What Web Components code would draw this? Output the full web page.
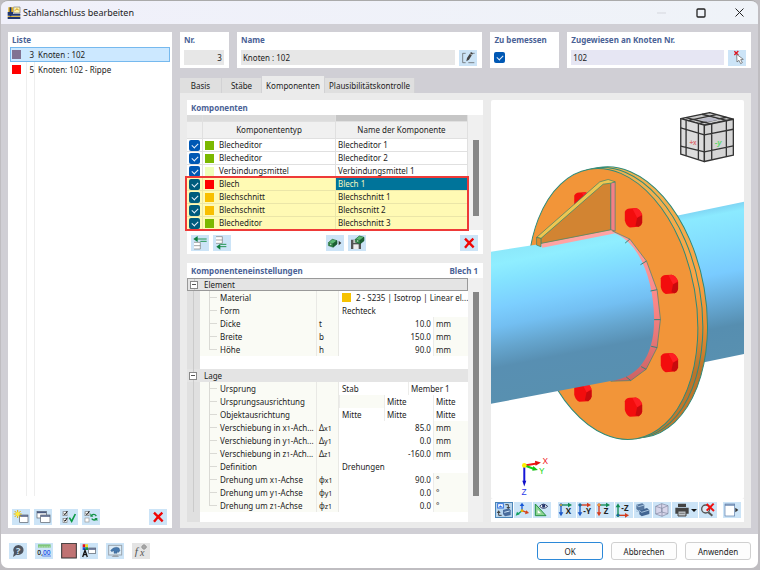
<!DOCTYPE html>
<html lang="de">
<head>
<meta charset="utf-8">
<title>Stahlanschluss bearbeiten</title>
<style>
  html { height: 100%; }
  body { margin: 0; min-height: 100%; display: flex; background: #bfbdc1; color: #1c1c1c;
    font: 8px/13px "Noto Sans", "Open Sans", sans-serif; }
</style>
</head>
<body>
<steel-dialog></steel-dialog>
<script>
const BASE = `*{box-sizing:border-box} button,input{font:inherit;color:inherit;margin:0} button{cursor:default}`;
function define(name, render) {
  customElements.define(name, class extends HTMLElement {
    connectedCallback() {
      if (this.shadowRoot) return;
      const t = document.createElement('template');
      t.innerHTML = render(this);
      this.attachShadow({ mode: 'open' }).append(t.content.cloneNode(true));
    }
  });
}

const axisIcon = (a, b, dot, label, up) => `
  <g stroke-width="4" fill="none"><path stroke="${a}" d="M8 ${up ? 40 : 9}H32"/><path stroke="${b}" d="M9 ${up ? '40V14' : '9V34'}"/></g>
  <path fill="${a}" d="M30 ${up ? 33 : 2}l12 7-12 7z"/>
  <path fill="${b}" d="${up ? 'M2 16L9 4l7 12z' : 'M2 31h14L9 43z'}"/>
  <circle cx="9" cy="${up ? 40 : 9}" r="4" fill="${dot}" stroke="${b}" stroke-width="2"/>
  <text x="${label.length > 1 ? 19 : 23}" y="${up ? 26 : 37}" font-size="24" font-weight="700" fill="#222">${label}</text>`;
const delX = '<path d="M15 11Q28 24 41 37M40 11Q26 24 15 38" stroke="#f00505" stroke-width="7" fill="none"/>';
const win = (x, y, w, h, f = '#fff') => `<rect x="${x}" y="${y}" width="${w}" height="${h}" fill="${f}" stroke="#555c66" stroke-width="2"/><path d="M${x} ${y + 3}h${w}" stroke="#4a5a80" stroke-width="5"/>`;
const tick = (x, y) => `<rect x="${x}" y="${y}" width="12" height="12" fill="#fff" stroke="#777" stroke-width="2"/><path d="M${x + 2} ${y + 5}l4 4 7-11" fill="none" stroke="#111" stroke-width="3"/>`;
const part = (x, y) => `<g transform="translate(${x} ${y})" stroke="#17502a" stroke-width="1"><path fill="#2d8745" d="M0 10L12 0 26 4V14L14 24 0 19z"/><path fill="#5cb874" d="M0 10L12 0 26 4 14 13z"/><path fill="#1b5f33" d="M14 13L26 4V14L14 24z"/><circle cx="7" cy="15" r="3" fill="#bfe7c7"/></g>`;
const ICONS = {
  edit: '<g fill="none" stroke="#555" stroke-width="2"><path d="M20 10H11V38H20M28 38H46M41 10h6"/></g><path d="M22 34l2-10L36 6l6 4L30 29z" fill="#444"/><path d="M33 11l6 4" stroke="#fff" stroke-width="2"/>',
  pick: '<path d="M19 4l12 11M31 3L19 15" stroke="#e01522" stroke-width="4"/><path d="M26 13l1 23 6-5 5 10 5-3-5-9 8-1z" fill="#fff" stroke="#555" stroke-width="2"/>',
  newItem: win(23, 18, 25, 22) + '<g stroke="#e3b600" stroke-width="3"><path d="M17 3v24M5 15h24M8 6l18 18M26 6L8 24"/></g><circle cx="17" cy="15" r="6" fill="#ffea3c"/>',
  copyItem: win(9, 7, 28, 20) + win(20, 18, 28, 22),
  checkAll: tick(9, 8) + tick(9, 28) + '<path d="M28 26l7 11L46 15" fill="none" stroke="#0c9b45" stroke-width="5"/>',
  checkToggle: tick(9, 8) + '<rect x="9" y="27" width="12" height="12" fill="#fff" stroke="#999" stroke-width="2"/><path d="M28 20q8-8 15 1M44 29q-8 8-15 0" fill="none" stroke="#159447" stroke-width="4"/><path d="M25 13v10h9zM46 37V27H37z" fill="#159447"/>',
  remove: delX,
  rowAbove: '<path d="M9 22H28V42H9M9 32H28" fill="#fff" stroke="#777" stroke-width="2"/><path d="M16 12H47M28 19H47" stroke="#239652" stroke-width="3"/><path d="M7 12L20 3v18z" fill="#108040"/>',
  rowBelow: '<path d="M9 5H28V25H9M9 15H28" fill="#fff" stroke="#777" stroke-width="2"/><path d="M20 35H40M22 28H40" stroke="#239652" stroke-width="3"/><path d="M10 35L22 26v18z" fill="#108040"/>',
  partNext: part(7, 13) + '<path d="M38 17l8 7-8 7z" fill="#333"/>',
  partSave: '<path d="M9 14H35L39 18V42H9z" fill="#555"/><rect x="16" y="28" width="16" height="14" fill="#eee"/><rect x="16" y="15" width="14" height="9" fill="#ccc"/>' + part(22, 3),
  help: '<path d="M28 6a16 15 0 1 1-6 29L12 42l3-13A16 15 0 0 1 28 6z" fill="#4e5560"/><text x="21" y="32" font-size="28" font-weight="700" fill="#cce4f7">?</text>',
  units: '<rect x="9" y="4" width="38" height="10" fill="#7ec67b"/><path d="M13 9v5m5-5v5m5-5v5m5-5v5m5-5v5m5-5v5m5-5v5" stroke="#fff" stroke-width="1"/><text x="7" y="35" font-size="20" font-weight="600" fill="#222">0,<tspan fill="#2455e8">00</tspan></text><path d="M22 39H48" stroke="#2455e8" stroke-width="2"/>',
  colour: '<rect x="2" y="1" width="44" height="44" fill="#c07373" stroke="#333" stroke-width="3"/>',
  display: '<path fill="#e6101a" d="M8 4h8v9H8z"/><path fill="#ead822" d="M16 4h8v9h-8z"/><path fill="#1b4fd8" d="M8 13h8v8H8z"/><path fill="#13973e" d="M16 13h8v8h-8z"/><path d="M8 42l7-20 7 20M11 35h9" stroke="#111" stroke-width="4" fill="none"/>' + win(26, 15, 21, 16),
  monitor: '<rect x="8" y="7" width="39" height="29" fill="#dcecf8" stroke="#9ba4ad" stroke-width="3"/><path d="M17 42h22l-4-5H22z" fill="#9ba4ad"/><path d="M14 22q12-14 25-7l3 8-6 6-3-5v7h-9v-8l-7 3z" fill="#4779ad" stroke="#2b4f79" stroke-width="1"/>',
  formula: '<text x="8" y="36" font-size="34" font-style="italic" font-family="Liberation Serif,serif" fill="#555">f</text><text x="24" y="40" font-size="30" font-style="italic" font-family="Liberation Serif,serif" fill="#555">x</text><circle cx="36" cy="12" r="6" fill="none" stroke="#777" stroke-width="2"/><path d="M28 12h17M36 4v16" stroke="#777" stroke-width="2"/>',
  cycle: '<rect x="8" y="5" width="17" height="13" fill="#fff" stroke="#2f6fe0" stroke-width="3"/><path d="M11 16l5-6 7 6z" fill="#2f6fe0"/><path d="M31 8h9v9M20 40h-9v-9" fill="none" stroke="#444" stroke-width="3"/><path d="M34 15h12l-6 7zM5 33h12l-6-8z" fill="#444"/><path d="M24 24l18-5 5 6v14l-17 4-6-7z" fill="#4a6c9c"/><path d="M28 31l16-4" stroke="#cce4f7" stroke-width="3"/>',
  axes: '<path d="M24 24V9" stroke="#1757d6" stroke-width="4"/><path d="M17 12L24 2l7 10z" fill="#1757d6"/><path d="M24 26L12 36" stroke="#10a060" stroke-width="4"/><path d="M5 41l4-12 8 8z" fill="#10a060"/><path d="M24 26l14 5" stroke="#d4431d" stroke-width="4"/><path d="M45 33l-12 4 4-12z" fill="#d4431d"/><circle cx="24" cy="26" r="4" fill="#e7b800"/>',
  measure: '<path d="M7 6L39 41H7z" fill="#8ed493" stroke="#249145" stroke-width="3"/><path d="M14 23l10 11H14z" fill="#fff"/><path d="M20 13q11-13 24 0-12 12-24 0z" fill="#fff" stroke="#2d3b64" stroke-width="3"/><circle cx="32" cy="12" r="5" fill="#24356e"/>',
  viewX: axisIcon('#128c54', '#1b57c8', '#ffc400', 'X'),
  viewY: axisIcon('#d53b1c', '#1b57c8', '#128c54', '-Y'),
  viewZ: axisIcon('#128c54', '#d53b1c', '#ffd84a', 'Z'),
  viewMZ: axisIcon('#d53b1c', '#128c54', '#1b57c8', '-Z', true),
  solid: '<path d="M7 8l18-4 6 5v12l-18 5-6-5z" fill="#56779f"/><path d="M16 25l23-7 7 6v12l-23 7-7-6z" fill="#426592"/><path d="M7 9l7 5 17-5M16 25l7 6 22-7M6 27l8 2" stroke="#a7c3de" stroke-width="3" fill="none"/>',
  wire: '<g fill="#d7d5ea" stroke="#7f87a0" stroke-width="2"><path d="M8 13L26 5l19 6v24L27 43 8 36z"/><path d="M8 13l19 6 18-8M27 19v24M26 5v25M8 36l18-6 19 5" fill="none"/></g>',
  print: '<path fill="#444" d="M15 5h24v10H15zM7 17h40v18H7z"/><path d="M15 27h24v15H15z" fill="#bfc4c8" stroke="#444" stroke-width="3"/><path d="M19 34h16" stroke="#555" stroke-width="2"/>',
  zoomOff: '<circle cx="20" cy="21" r="12" fill="#dbe9f4" stroke="#555" stroke-width="4"/><path d="M28 31l12 10" stroke="#555" stroke-width="6"/><path d="M23 6L45 27M44 5L23 26" stroke="#f01010" stroke-width="6"/>',
  dock: '<rect x="6" y="6" width="29" height="36" fill="#fff" stroke="#5a7ba8" stroke-width="2"/><path d="M6 9h29" stroke="#5a7ba8" stroke-width="4"/><path d="M37 17l9 7-9 7z" fill="#333"/>',
};
define('tool-button', el => `<style>${BASE}
  :host{display:block;flex:none}
  button{display:flex;align-items:center;justify-content:center;width:18px;height:16px;padding:0;border:0;background:#cce4f7}
  :host([wide]) button{width:26px}
  :host([pressed]) button{outline:1px solid #4c86b8;outline-offset:-1px;background:#b9d6ee}
  :host([plain]) button{background:none} :host([off]) button{background:#e4e4e4}
  svg{display:block;width:18px;height:16px;flex:none;font-family:"Open Sans",sans-serif}
  i{border:3px solid transparent;border-top-color:#111;border-bottom:0}
  </style><button type="button" aria-label="${el.getAttribute('label')}"><svg viewBox="0 0 54 48" aria-hidden="true">${ICONS[el.getAttribute('icon')]}</svg>${el.hasAttribute('wide') ? '<i></i>' : ''}</button>`);
const tool = (icon, label, attrs = '') => `<tool-button icon="${icon}" label="${label}" ${attrs}></tool-button>`;

const CHECK = `input[type=checkbox]{appearance:none;display:block;width:11px;height:11px;margin:0;border-radius:2px;background:var(--check,#0058b4);position:relative}
  input[type=checkbox]::before{content:"";position:absolute;left:3px;top:3px;width:5px;height:3px;border:solid #e4eefa;border-width:0 0 1px 1px;transform:rotate(-45deg)}`;

define('group-box', el => `<style>${BASE}
  :host{display:flex;flex-direction:column;background:#fff;min-width:0}
  header{display:flex;justify-content:space-between;padding:1px 5px 0 4px;height:15px;flex:none;color:#4a6296;font-weight:700;white-space:nowrap}
  </style><header><span>${el.getAttribute('heading')}</span><span>${el.getAttribute('aside') || ''}</span></header><slot></slot>`);

define('field-box', el => `<style>${BASE}${CHECK}
  :host{display:flex;flex-direction:column;background:#fff;min-width:0;height:36px;padding:1px 5px 0 4px}
  label{color:#4a6296;font-weight:700;white-space:nowrap;line-height:14px}
  div{display:flex;gap:4px;height:15px;margin-top:3px;align-items:center}
  input[type=text]{flex:1;min-width:0;height:15px;padding:1px 2px;border:0;background:var(--field,#e7e7e7);text-align:var(--align,left)}
  </style><label for="f">${el.getAttribute('label')}</label><div>${el.hasAttribute('check')
    ? '<input id="f" type="checkbox" checked>' : `<input id="f" type="text" value="${el.getAttribute('value')}">`}<slot></slot></div>`);

define('connection-list', () => `<style>${BASE}
  :host{display:flex;flex:1}
  ul{flex:1;margin:0 2px 8px;padding:0;list-style:none;background:linear-gradient(#eee,#eee) 16px 0/1px 100% no-repeat,linear-gradient(#eee,#eee) 24px 0/1px 100% no-repeat}
  li{display:grid;grid-template-columns:10px 13px 1fr;align-items:center;height:15px;padding-left:1px;white-space:nowrap;border:1px solid transparent}
  li[aria-selected=true]{background:#cce8ff;border-color:#76b9ee}
  i{width:9px;height:9px} b{font-weight:400;text-align:right;padding-right:1px} span{padding-left:3px}
  </style><ul role="listbox" aria-label="Liste">
  <li role="option" aria-selected="true"><i style="background:#817292"></i><b>3</b><span>Knoten : 102</span></li>
  <li role="option"><i style="background:#f00"></i><b>5</b><span>Knoten: 102 - Rippe</span></li></ul>`);

define('tab-bar', () => `<style>${BASE}
  :host{display:flex;align-items:flex-end;height:17px}
  button{width:var(--w);height:15px;border:0;border-right:1px solid #d2d2d4;padding:0;background:#dfdfdf;white-space:nowrap;line-height:15px}
  button[aria-selected=true]{height:17px;padding-top:2px;background:#ebebeb}
  </style><button type="button" role="tab" style="--w:42px">Basis</button><button type="button" role="tab" style="--w:40px">Stäbe</button><button type="button" role="tab" aria-selected="true" style="--w:63px">Komponenten</button><button type="button" role="tab" style="--w:90px">Plausibilitätskontrolle</button>`);

const SCROLL = `.scroll{flex:none;width:15px;background:#f0f0f0;padding:var(--top,0) 4px 0 5px}
  .scroll i{display:block;width:6px;height:var(--thumb);background:#868686}`;
const rows = [['#7bb800', 'Blecheditor', 'Blecheditor 1'], ['#7bb800', 'Blecheditor', 'Blecheditor 2'], ['#efffb8', 'Verbindungsmittel', 'Verbindungsmittel 1'],
  ['#ff0000', 'Blech', 'Blech 1'], ['#f8bf00', 'Blechschnitt', 'Blechschnitt 1'], ['#f8bf00', 'Blechschnitt', 'Blechscnitt 2'], ['#7bb800', 'Blecheditor', 'Blechschnitt 3']];
const compRow = r => `<tr><td><input type="checkbox" checked aria-label="${r[2]}"></td><td><i style="background:${r[0]}"></i>${r[1]}</td><td${r[2] === 'Blech 1' ? ' class="sel"' : ''}>${r[2]}</td></tr>`;
define('component-table', () => `<style>${BASE}${CHECK}${SCROLL}
  :host{display:flex;--top:25px;--thumb:76px}
  table{flex:1;min-width:0;table-layout:fixed;border-collapse:separate;border-spacing:0}
  th,td{height:13px;padding:0;line-height:12px;text-align:left;white-space:nowrap;border:0 solid #e0e0e0;border-width:0 1px 1px 0}
  .strip th{height:7px;line-height:6px;background:#dcdcdc} .strip th:last-child{background:#c6c6c6}
  .names th{height:17px;background:#f0f0f0;font-weight:400;text-align:center}
  td:first-child{padding-left:2px} td:last-child{padding-left:2px}
  td i{display:inline-block;width:9px;height:9px;margin:0 5px 0 2px;vertical-align:-2px}
  .mark{position:relative;--check:#005b7d}
  .mark td{background:#fffab4;border-color:#ebe6a8} .mark .sel{background:#00749a;color:#f4f7c0}
  .mark::after{content:"";position:absolute;inset:-2px -1px -1px -2px;border:2px solid #ee3a38;pointer-events:none}
  </style><table><colgroup><col style="width:16px"><col><col style="width:132px"></colgroup>
  <thead><tr class="strip"><th></th><th></th><th></th></tr><tr class="names"><th></th><th>Komponententyp</th><th>Name der Komponente</th></tr></thead>
  <tbody>${rows.slice(0, 3).map(compRow).join('')}</tbody><tbody class="mark">${rows.slice(3).map(compRow).join('')}</tbody></table><div class="scroll"><i></i></div>`);

const s = t => `<small>${t}</small>`;
const num = (name, sym, v, u) => [name, sym, `<td colspan="3" class="n">${v}</td><td class="u">${u}</td>`];
const one = (name, v) => [name, '', `<td colspan="4">${v}</td>`];
const element = [one('Material', '<i></i>2 - S235 | Isotrop | Linear el...'), one('Form', 'Rechteck'),
  num('Dicke', 't', '10.0', 'mm'), num('Breite', 'b', '150.0', 'mm'), num('Höhe', 'h', '90.0', 'mm')];
const lage = [['Ursprung', '', '<td colspan="2">Stab</td><td colspan="2" class="l">Member 1</td>'],
  ['Ursprungsausrichtung', '', '<td class="u"></td><td colspan="2" class="l">Mitte</td><td class="l">Mitte</td>'],
  ['Objektausrichtung', '', '<td>Mitte</td><td colspan="2" class="l">Mitte</td><td class="l">Mitte</td>'],
  ...[['x', '85.0'], ['y', '0.0'], ['z', '-160.0']].map(([a, v]) => num(`Verschiebung in ${a}${s('1')}-Ach...`, 'Δ' + s(a + '1'), v, 'mm')),
  one('Definition', 'Drehungen'),
  ...[['x', '90.0'], ['y', '0.0'], ['z', '0.0']].map(([a, v]) => num(`Drehung um ${a}${s('1')}-Achse`, 'φ' + s(a + '1'), v, '°'))];
const propRow = (r, i, all) => `<tr><td class="g"></td><td class="name${i === all.length - 1 ? ' last' : ''}">${r[0]}</td><td class="sym">${r[1]}</td>${r[2]}</tr>`;
const head = (t, c = '') => `<tr class="head ${c}"><th class="g"><button type="button" aria-label="${t} einklappen"></button></th><th colspan="6">${t}</th></tr>`;
define('property-grid', () => `<style>${BASE}${SCROLL}
  :host{display:flex;flex:1;--top:14px;--thumb:204px}
  .body{flex:1;min-width:0;background:linear-gradient(90deg,#e0e0e0 13px,#fff 13px)}
  table{width:100%;table-layout:fixed;border-collapse:separate;border-spacing:0}
  td,th{height:13px;padding:0 0 0 3px;line-height:13px;text-align:left;font-weight:400;white-space:nowrap}
  .g{background:linear-gradient(#cbcbcb,#cbcbcb) 6px 0/1px 100% no-repeat #e0e0e0;padding:0}
  .head th{background-color:#e4e4e4} .head th:last-child{padding-left:4px} .head.first th{border:solid #999;border-width:1px 0;line-height:11px}
  .head.first .g{border-left-width:1px} .head.first th:last-child{border-right-width:1px}
  button{display:block;width:8px;height:8px;margin-left:2px;padding:0;border:1px solid #888;background:linear-gradient(#555,#555) 1px 50%/4px 1px no-repeat #fff}
  .name{--l:linear-gradient(#dadad5,#dadad5);padding-left:20px;background:var(--l) 9px 0/1px 100% no-repeat,var(--l) 9px 6px/8px 1px no-repeat #fafbf5}
  .last{background:var(--l) 9px 0/1px 6px no-repeat,var(--l) 9px 6px/8px 1px no-repeat #fafbf5}
  .sym{padding-left:2px;background:#fafbf5;border:solid #e9e9e5;border-width:0 1px}
  .n{text-align:right;padding-right:2px} .u{background:#fafbf5} .u,.l{padding-left:2px;border-left:1px solid #ececea}
  small{font-size:7px;line-height:0} i{display:inline-block;width:9px;height:9px;margin:0 5px 0 0;vertical-align:-1px;background:#f6c200}
  </style><div class="body"><table><colgroup><col style="width:13px"><col><col style="width:23px"><col style="width:45px"><col style="width:24px"><col style="width:25px"><col style="width:35px"></colgroup>
  <tbody>${head('Element', 'first')}${element.map(propRow).join('')}<tr><td class="g"></td><td colspan="6"></td></tr></tbody>
  <tbody>${head('Lage')}${lage.map(propRow).join('')}</tbody></table></div><div class="scroll"><i></i></div>`);

const bolt = (x, y) => `<g transform="translate(${x} ${y})"><path fill="#f30d0d" d="M-25-18Q-22-27-10-28L8-29Q20-26 27-10V14Q25 24 17 27L-10 29Q-21 25-25 8z"/><path fill="#c80a0d" d="M12 0L27-7V14Q25 24 17 27L7 24z"/><path fill="#ff1d22" d="M-2-27L8-29Q20-26 27-10L12 0z"/></g>`;
const disc = (dx, dy, extra) => `<ellipse cx="0" cy="0" rx="249" ry="411" transform="translate(${384 + dx} ${627 + dy}) rotate(-10)" ${extra}/>`;
define('scene-view', () => `<style>:host{display:block;flex:1;min-height:0;background:#fff;border-radius:2px;overflow:hidden}
  svg{display:block;width:100%;height:100%;font-family:"Liberation Sans",sans-serif}</style>
<svg viewBox="18 15 760 1197" preserveAspectRatio="xMidYMid meet" role="img" aria-label="3D-Ansicht des Stahlanschlusses">
<defs>
 <linearGradient id="p" gradientUnits="userSpaceOnUse" x1="18" y1="470" x2="104" y2="910">
  <stop offset="0" stop-color="#8ce8fa"/><stop offset=".09" stop-color="#8feeff"/><stop offset=".2" stop-color="#84e3ff"/><stop offset=".37" stop-color="#7ccfff"/><stop offset=".5" stop-color="#73bff2"/><stop offset=".64" stop-color="#65a5ce"/><stop offset=".77" stop-color="#588fb2"/><stop offset="1" stop-color="#5890b0"/></linearGradient>
 <linearGradient id="q" gradientUnits="userSpaceOnUse" x1="672" y1="341" x2="756" y2="780">
  <stop offset="0" stop-color="#80d6f4"/><stop offset=".05" stop-color="#8beaff"/><stop offset=".25" stop-color="#82dcff"/><stop offset=".44" stop-color="#79cbff"/><stop offset=".62" stop-color="#68acd9"/><stop offset=".8" stop-color="#568eb0"/><stop offset="1" stop-color="#5890b0"/></linearGradient>
 <linearGradient id="r" x1="0" y1="0" x2="0" y2="1"><stop offset="0" stop-color="#efb350"/><stop offset=".45" stop-color="#fba446"/><stop offset=".65" stop-color="#e58c32"/><stop offset=".8" stop-color="#b9732b"/><stop offset="1" stop-color="#c8782a"/></linearGradient>
 <linearGradient id="w" x1="0" y1="0" x2="0" y2="1"><stop offset="0" stop-color="#ffa0a0"/><stop offset=".5" stop-color="#fa8585"/><stop offset="1" stop-color="#cb6264"/></linearGradient>
</defs>
<path fill="url(#q)" d="M500 378L778 320V777L560 822z"/>
${disc(29, -5, 'fill="url(#r)" stroke="#2d8a7a" stroke-width="3"')}${disc(21, -4, 'fill="url(#r)"')}
${disc(15, -3, 'fill="url(#r)" stroke="#2d8a7a" stroke-width="3"')}${disc(7, -1, 'fill="url(#r)"')}
${disc(0, 0, 'fill="#f29539" stroke="#2d8a7a" stroke-width="3"')}
${bolt(293, 320)}${bolt(445, 368)}${bolt(553, 568)}${bolt(553, 803)}${bolt(445, 937)}${bolt(293, 892)}
<path fill="url(#w)" stroke="#3b8377" stroke-width="2" d="M383 408L435 432 485 498 517 585 527 673 517 758 484 823 438 857 378 859z"/>
<path fill="url(#p)" d="M18 470L385 413C466 440 508 560 508 675S455 850 378 858L18 927z"/>
<path d="M421 444L435 432M467 509L485 498M497 588L517 584M508 674H527M499 754L517 758M469 815L484 823M424 846L438 857" stroke="#3b8377" stroke-width="3"/>
<path fill="#ffa3a3" d="M168 446L380 405 388 415 172 458z"/>
<path fill="#d28432" stroke="#2d8a7a" stroke-width="2" d="M168 445V430L355 265 378 262V404z"/>
<path fill="#f57f84" stroke="#3b8377" stroke-width="2" d="M378 262L391 260V408L378 404z"/>
<path fill="#edc651" stroke="#34816a" stroke-width="2" d="M155 427L345 260 370 253 391 260 378 264 355 267 168 430z"/>
<path fill="#dc8b2e" stroke="#34816a" stroke-width="2" d="M155 427L168 430V455L155 450z"/>
<g stroke="#333" stroke-width="4" stroke-linejoin="round"><path fill="#c9c9c9" d="M588 70L675 52 746 72 659 90z"/><path fill="#dcdcdc" d="M588 70L659 90V199L588 177z"/><path fill="#d4d4d4" d="M659 90L746 72V180L659 199z"/>
<path fill="none" d="M604 75V182M641 85V193M588 98L659 119M588 153L659 170M681 86V194M725 76V185M659 119L746 102M659 170L746 152M604 67L678 86M652 57L728 76M610 76L695 58M641 85L725 66"/></g>
<path fill="#b9bac8" d="M642 73L675 66 705 73 669 80z"/>
<text x="614" y="148" font-size="19" font-weight="700" fill="#dc7070">+x</text><text x="690" y="150" font-size="23" font-weight="700" font-style="italic" fill="#5ada68">-y</text>
<g stroke-width="6"><path stroke="#f01515" d="M119 1112L155 1106"/><path stroke="#16d016" d="M119 1112L146 1122"/><path stroke="#1717d8" d="M118 1112V1162"/></g>
<path fill="#e01010" d="M150 1098L168 1103 152 1113z"/><path fill="#16c016" d="M145 1114L159 1126 142 1128z"/><path fill="#1111c8" d="M112 1158h12l-6 17z"/><circle cx="118" cy="1112" r="7" fill="#fff000"/>
<g font-size="25"><text x="173" y="1109" fill="#f02020">X</text><text x="162" y="1137" fill="#20d820">Y</text><text x="110" y="1200" fill="#2a3ae8">Z</text></g>
</svg>`);

define('steel-dialog', () => `<style>${BASE}
  :host{display:flex;flex-direction:column;flex:1;min-width:0;margin:0 2px 2px 1px;background:#d0cfd5;border-top:1px solid #aaa;border-radius:7px;overflow:hidden}
  .title{display:flex;align-items:center;height:23px;flex:none;padding:0 13px 0 6px;background:linear-gradient(90deg,#f0f0fa,#eff3f8);font-size:9px}
  .title svg{width:14px;height:14px;margin-right:2px} h1{flex:1;margin:0;font:inherit}
  .title button{width:11px;height:11px;padding:0;border:0;background:none;margin-left:28px} .title button svg{width:11px;height:11px;margin:0;display:block}
  main{flex:1;display:grid;grid-template-columns:164fr 571fr;gap:8px;padding:8px 7px 6px}
  .right{display:flex;flex-direction:column;min-width:0}
  .fields{display:grid;grid-template-columns:49fr 246fr 69fr 184fr;gap:8px;margin-bottom:8px}
  .page{flex:1;display:grid;grid-template-columns:296fr 253fr;gap:8px;padding:7px 7px 6px;background:#ebebeb}
  .left{display:flex;flex-direction:column;gap:9px;min-width:0}
  .tools{display:flex;align-items:center;gap:4px;padding:5px 5px 3px 4px;flex:none}
  .push{margin-left:auto} .sp{margin-left:4px}
  .view{display:flex;flex-direction:column;min-width:0} .view .tools{background:#fff;gap:1px;padding:3px 3px 4px 4px} .view .sp{margin-left:6px}
  footer{display:flex;align-items:center;gap:8px;height:34px;flex:none;padding:0 7px 0 8px;background:#fff}
  .pair{display:flex;gap:1px}
  footer button{width:66px;height:18px;padding:0;border:1px solid #d0d0d0;border-radius:3px;background:#fdfdfd}
  footer .ok{border-color:#2b88d8;margin-left:auto}
  </style>
  <div class="title"><svg viewBox="0 0 42 42" aria-hidden="true"><path fill="#e0ad18" d="M4 4h14v14H4z"/><path fill="#fff4b0" stroke="#777" stroke-width="2" d="M20 3h19v18H20z"/><path d="M24 14q6-10 11-1" stroke="#d99500" stroke-width="3" fill="none"/><path fill="#21366f" d="M2 18h16v5h22v6H2zM2 33h38v6H2zM8 4h5v30H8z"/><path fill="#d4a312" d="M2 30h38v2H2z"/></svg><h1>Stahlanschluss bearbeiten</h1>
  <button type="button" aria-label="Minimieren"><svg viewBox="0 0 11 11"><path d="M1 6h9" stroke="#d5d7dd"/></svg></button>
  <button type="button" aria-label="Maximieren"><svg viewBox="0 0 11 11"><rect x="2" y="2" width="8" height="8" rx="1" fill="none" stroke="#222" stroke-width="1.3"/></svg></button>
  <button type="button" aria-label="Schließen"><svg viewBox="0 0 22 22"><path d="M3 3l16 16M19 3L3 19" stroke="#222" stroke-width="2"/></svg></button></div>
  <main>
   <group-box heading="Liste"><connection-list></connection-list>
    <div class="tools">${tool('newItem', 'Neu')}${tool('copyItem', 'Kopieren')}${tool('checkAll', 'Alle auswählen', 'class="sp"')}${tool('checkToggle', 'Auswahl umkehren')}${tool('remove', 'Löschen', 'class="push"')}</div></group-box>
   <div class="right">
    <div class="fields">
     <field-box label="Nr." value="3" style="--align:right"></field-box>
     <field-box label="Name" value="Knoten : 102">${tool('edit', 'Name bearbeiten')}</field-box>
     <field-box label="Zu bemessen" check></field-box>
     <field-box label="Zugewiesen an Knoten Nr." value="102" style="--field:#e6e6f3">${tool('pick', 'Knoten wählen')}</field-box>
    </div>
    <tab-bar role="tablist"></tab-bar>
    <div class="page">
     <div class="left">
      <group-box heading="Komponenten"><component-table></component-table>
       <div class="tools">${tool('rowAbove', 'Darüber einfügen')}${tool('rowBelow', 'Darunter einfügen')}${tool('partNext', 'Bibliothek', 'class="push"')}${tool('partSave', 'Speichern')}${tool('remove', 'Löschen', 'class="push"')}</div></group-box>
      <group-box heading="Komponenteneinstellungen" aside="Blech 1" style="flex:1"><property-grid></property-grid></group-box>
     </div>
     <div class="view"><scene-view></scene-view>
      <div class="tools">${tool('cycle', 'Ansicht wechseln', 'pressed')}${tool('axes', 'Achsen')}${tool('measure', 'Messen')}${tool('viewX', 'Ansicht X', 'class="sp"')}${tool('viewY', 'Ansicht -Y')}${tool('viewZ', 'Ansicht Z')}${tool('viewMZ', 'Ansicht -Z')}${tool('solid', 'Volumen')}${tool('wire', 'Drahtmodell')}${tool('print', 'Drucken', 'wide')}${tool('zoomOff', 'Zoom zurücksetzen')}${tool('dock', 'Fenster', 'class="push"')}</div></div>
    </div>
   </div>
  </main>
  <footer>${tool('help', 'Hilfe')}${tool('units', 'Einheiten')}<div class="pair">${tool('colour', 'Farbe', 'plain')}${tool('display', 'Anzeige')}</div>${tool('monitor', 'Bildschirm')}${tool('formula', 'Formel', 'off')}
   <button type="button" class="ok">OK</button><button type="button">Abbrechen</button><button type="button">Anwenden</button></footer>`);
</script>
</body>
</html>
